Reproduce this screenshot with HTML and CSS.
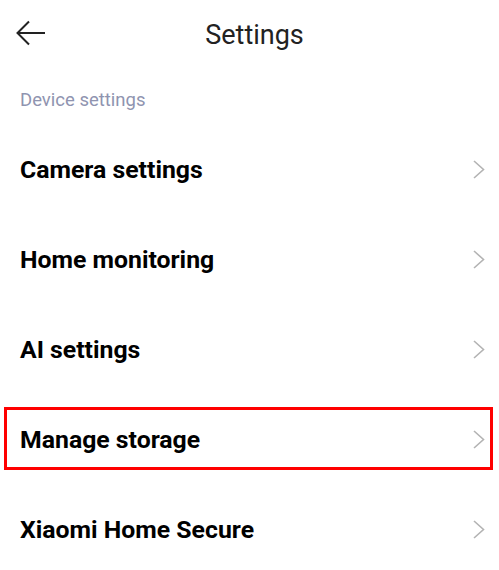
FILE: index.html
```html
<!DOCTYPE html>
<html lang="en">
<head>
    <meta charset="UTF-8">
    <meta name="viewport" content="width=device-width, initial-scale=1.0">
    <title>Settings</title>
    <link rel="stylesheet" href="styles.css">
</head>
<body>
    <div class="header">
        <svg class="back" width="30" height="26" viewBox="0 0 30 26">
            <path d="M29 13H2M13 1.5L1.5 13L13 24.5" fill="none" stroke="#222" stroke-width="2"/>
        </svg>
        <h1>Settings</h1>
    </div>

    <div class="section">Device settings</div>

    <div class="list">
        <div class="row"><span>Camera settings</span><svg class="chevron" width="12" height="19" viewBox="0 0 12 19"><path d="M1 1L10.5 9.5L1 18" fill="none" stroke="#b3b3b3" stroke-width="1.6"/></svg></div>
        <div class="row"><span>Home monitoring</span><svg class="chevron" width="12" height="19" viewBox="0 0 12 19"><path d="M1 1L10.5 9.5L1 18" fill="none" stroke="#b3b3b3" stroke-width="1.6"/></svg></div>
        <div class="row"><span>AI settings</span><svg class="chevron" width="12" height="19" viewBox="0 0 12 19"><path d="M1 1L10.5 9.5L1 18" fill="none" stroke="#b3b3b3" stroke-width="1.6"/></svg></div>
        <div class="row highlight"><span>Manage storage</span><svg class="chevron" width="12" height="19" viewBox="0 0 12 19"><path d="M1 1L10.5 9.5L1 18" fill="none" stroke="#b3b3b3" stroke-width="1.6"/></svg></div>
        <div class="row"><span>Xiaomi Home Secure</span><svg class="chevron" width="12" height="19" viewBox="0 0 12 19"><path d="M1 1L10.5 9.5L1 18" fill="none" stroke="#b3b3b3" stroke-width="1.6"/></svg></div>
    </div>
</body>
</html>
```

FILE: styles.css
```css
body {
    font-family: Roboto, "Noto Sans", sans-serif;
    background-color: #fff;
    color: #000;
    margin: 0;
    padding: 0;
    overflow: hidden;
}

.header {
    position: relative;
    height: 66px;
    display: flex;
    align-items: center;
    justify-content: center;
    padding: 4px 0 0 10px;
    box-sizing: border-box;
}

.back {
    position: absolute;
    left: 16px;
    top: 20px;
}

.header h1 {
    margin: 0;
    font-size: 27px;
    font-weight: 400;
    color: #222;
}

.section {
    height: 58px;
    padding: 9px 0 0 20px;
    box-sizing: border-box;
    display: flex;
    align-items: center;
    font-size: 18.5px;
    color: #8f94b0;
}

.row {
    position: relative;
    height: 90px;
    display: flex;
    align-items: center;
    justify-content: space-between;
    padding: 0 14px 0 20px;
    font-size: 24.8px;
    font-weight: 700;
}

.highlight::after {
    content: "";
    position: absolute;
    left: 4px;
    right: 6px;
    top: 13px;
    bottom: 14px;
    border: 3px solid #f00;
}
```
